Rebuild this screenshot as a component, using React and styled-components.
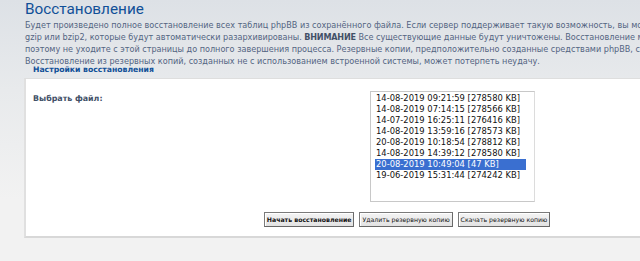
import React from "react";
import styled, { createGlobalStyle } from "styled-components";

const GlobalStyle = createGlobalStyle`
  html, body {
    margin: 0;
    padding: 0;
    width: 640px;
    height: 261px;
    overflow: hidden;
  }
  body {
    background: linear-gradient(to bottom, #dde1e6 0px, #e8eaec 90px, #f2f2f2 200px, #f2f2f2 100%);
    font-family: "DejaVu Sans", Verdana, sans-serif;
  }
`;

const Page = styled.div`
  width: 900px;
  padding-left: 24px;
`;

const Title = styled.h1`
  margin: 0;
  padding: 0 0 0 1px;
  height: 19px;
  font-family: Roboto, "Liberation Sans", Arial, sans-serif;
  font-weight: normal;
  font-size: 15.3px;
  line-height: 19px;
  color: #115098;
`;

const Intro = styled.p`
  margin: 0;
  padding-left: 1px;
  font-size: 8.1px;
  line-height: 12px;
  color: #536482;
  white-space: nowrap;

  strong {
    color: #425067;
    letter-spacing: -0.2px;
  }
`;

const Legend = styled.div`
  margin-top: -2px;
  padding-left: 9px;
  height: 10px;
  font-size: 7.7px;
  font-weight: bold;
  line-height: 10px;
  color: #115098;
  white-space: nowrap;
`;

const Box = styled.div`
  margin-top: 3px;
  width: 766px;
  height: 160px;
  box-sizing: border-box;
  background: #fff;
  border-top: 1px solid #dedede;
  border-left: 2px solid #e0e0e0;
  border-bottom: 2px solid #d8d8d8;
  padding: 12px 0 0 7px;
`;

const Row = styled.div`
  display: grid;
  grid-template-columns: 337px 1fr;
  align-items: start;
`;

const Label = styled.label`
  padding-top: 2px;
  font-size: 7.9px;
  font-weight: bold;
  line-height: 12px;
  color: #425067;
`;

const FileList = styled.div`
  width: 165px;
  height: 111px;
  box-sizing: border-box;
  border: 1px solid #c8c8c8;
  border-right-color: #dcdcdc;
  padding: 1px 8px 0 4px;
  background: #fff;
`;

const Option = styled.div`
  height: 11px;
  padding-left: 1px;
  font-size: 8.4px;
  line-height: 11px;
  white-space: nowrap;
  color: ${(p) => (p.$selected ? "#ffffff" : "#111111")};
  background: ${(p) => (p.$selected ? "#3a6fd0" : "transparent")};
`;

const Buttons = styled.div`
  display: flex;
  justify-content: center;
  gap: 5px;
  margin-top: 10px;
  padding-right: 9px;
`;

const Button = styled.button`
  height: 15px;
  margin: 0;
  padding: 0 2px;
  font-family: "DejaVu Sans", Verdana, sans-serif;
  font-size: 6.2px;
  font-weight: ${(p) => (p.$primary ? "bold" : "normal")};
  line-height: 13px;
  color: #111;
  background: linear-gradient(to bottom, #f4f4f4, #e2e2e2);
  border: 1px solid #7a7a7a;
  border-right-color: #6a6a6a;
  border-bottom-color: #666;
  box-shadow: inset 1px 1px 0 #fff;
  white-space: nowrap;
`;

const files = [
  "14-08-2019 09:21:59 [278580 KB]",
  "14-08-2019 07:14:15 [278566 KB]",
  "14-07-2019 16:25:11 [276416 KB]",
  "14-08-2019 13:59:16 [278573 KB]",
  "20-08-2019 10:18:54 [278812 KB]",
  "14-08-2019 14:39:12 [278580 KB]",
  "20-08-2019 10:49:04 [47 KB]",
  "19-06-2019 15:31:44 [274242 KB]",
];

export default function App() {
  return (
    <>
      <GlobalStyle />
      <Page>
        <Title>Восстановление</Title>
        <Intro>
          Будет произведено полное восстановление всех таблиц phpBB из сохранённого файла. Если сервер поддерживает такую возможность, вы можете использовать сжатые файлы
          <br />
          gzip или bzip2, которые будут автоматически разархивированы. <strong>ВНИМАНИЕ</strong> Все существующие данные будут уничтожены. Восстановление может занять длительное время,
          <br />
          поэтому не уходите с этой страницы до полного завершения процесса. Резервные копии, предположительно созданные средствами phpBB, сохраняются в каталоге store.
          <br />
          Восстановление из резервных копий, созданных не с использованием встроенной системы, может потерпеть неудачу.
        </Intro>
        <Legend>Настройки восстановления</Legend>
        <Box>
          <Row>
            <Label>Выбрать файл:</Label>
            <FileList>
              {files.map((f, i) => (
                <Option key={f} $selected={i === 6}>
                  {f}
                </Option>
              ))}
            </FileList>
          </Row>
          <Buttons>
            <Button $primary>Начать восстановление</Button>
            <Button>Удалить резервную копию</Button>
            <Button>Скачать резервную копию</Button>
          </Buttons>
        </Box>
      </Page>
    </>
  );
}
